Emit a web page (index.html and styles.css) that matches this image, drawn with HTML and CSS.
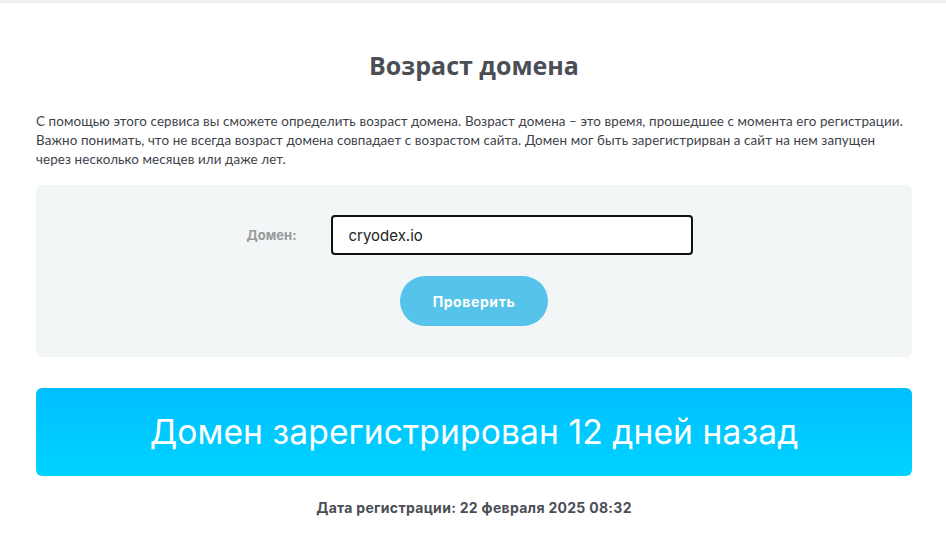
FILE: index.html
```html
<!DOCTYPE html>
<html lang="ru">
<head>
<meta charset="utf-8">
<title>Возраст домена</title>
<link rel="stylesheet" href="styles.css">
</head>
<body>
<div class="topline"></div>
<main class="wrap">
  <h1 class="title">Возраст домена</h1>
  <p class="intro">С помощью этого сервиса вы сможете определить возраст домена. Возраст домена – это время, прошедшее с момента его регистрации. Важно понимать, что не всегда возраст домена совпадает с возрастом сайта. Домен мог быть зарегистрирван а сайт на нем запущен через несколько месяцев или даже лет.</p>
  <form class="panel">
    <div class="row">
      <label class="label" for="d">Домен:</label>
      <input class="field" id="d" type="text" value="cryodex.io">
    </div>
    <button class="btn" type="button">Проверить</button>
  </form>
  <div class="result">Домен зарегистрирован 12 дней назад</div>
  <p class="date">Дата регистрации: 22 февраля 2025 08:32</p>
</main>
</body>
</html>
```
FILE: styles.css
```css
* { box-sizing: border-box; }
html, body { margin: 0; padding: 0; background: #fff; }
body { font-family: "Noto Sans", "Open Sans", sans-serif; color: #4a4e55; }
.topline { height: 3px; background: #efefef; }
.wrap { margin: 0 34px 0 36px; padding-top: 46px; }
.title {
  margin: 0; text-align: center;
  font-family: "Open Sans", sans-serif; font-weight: 700; font-size: 25px;
  letter-spacing: 0; color: #4a4e55; line-height: 32px;
}
.intro {
  margin: 31px 0 0; font-family: "Lato", sans-serif; font-size: 13.4px;
  line-height: 19px; color: #3e4249; letter-spacing: 0.1px;
}
.panel {
  margin-top: 16px; background: #f3f6f7; border-radius: 6px;
  height: 172px; padding-top: 30px;
  display: flex; flex-direction: column; align-items: center;
}
.row { display: flex; align-items: center; margin-right: 9px; }
.label {
  width: 84px; font-family: "Inter", sans-serif; font-weight: 700;
  font-size: 13px; color: #98999b;
}
.field {
  width: 362px; height: 40px; border: 2px solid #111; border-radius: 4px;
  padding: 0 16px; font-family: "Inter", sans-serif; font-size: 15px; color: #222;
  background: #fff; outline: none;
}
.btn {
  margin-top: 21px; width: 148px; height: 50px; border: 0; border-radius: 25px;
  background: #55c3ea; color: #fff; font-family: "Inter", sans-serif;
  font-weight: 700; font-size: 14px; letter-spacing: 0.6px;
}
.result {
  margin-top: 31px; height: 88px; border-radius: 6px;
  background: linear-gradient(180deg, #00bfff 0%, #00d3ff 100%);
  color: #fff; font-family: "Inter", sans-serif; font-weight: 400; font-size: 33.6px;
  letter-spacing: 0.1px; padding-bottom: 2px;
  display: flex; align-items: center; justify-content: center;
}
.date {
  margin: 23px 0 0; text-align: center; font-family: "Inter", sans-serif;
  font-weight: 700; font-size: 14px; letter-spacing: 0.3px; color: #4a4e55;
}
```
